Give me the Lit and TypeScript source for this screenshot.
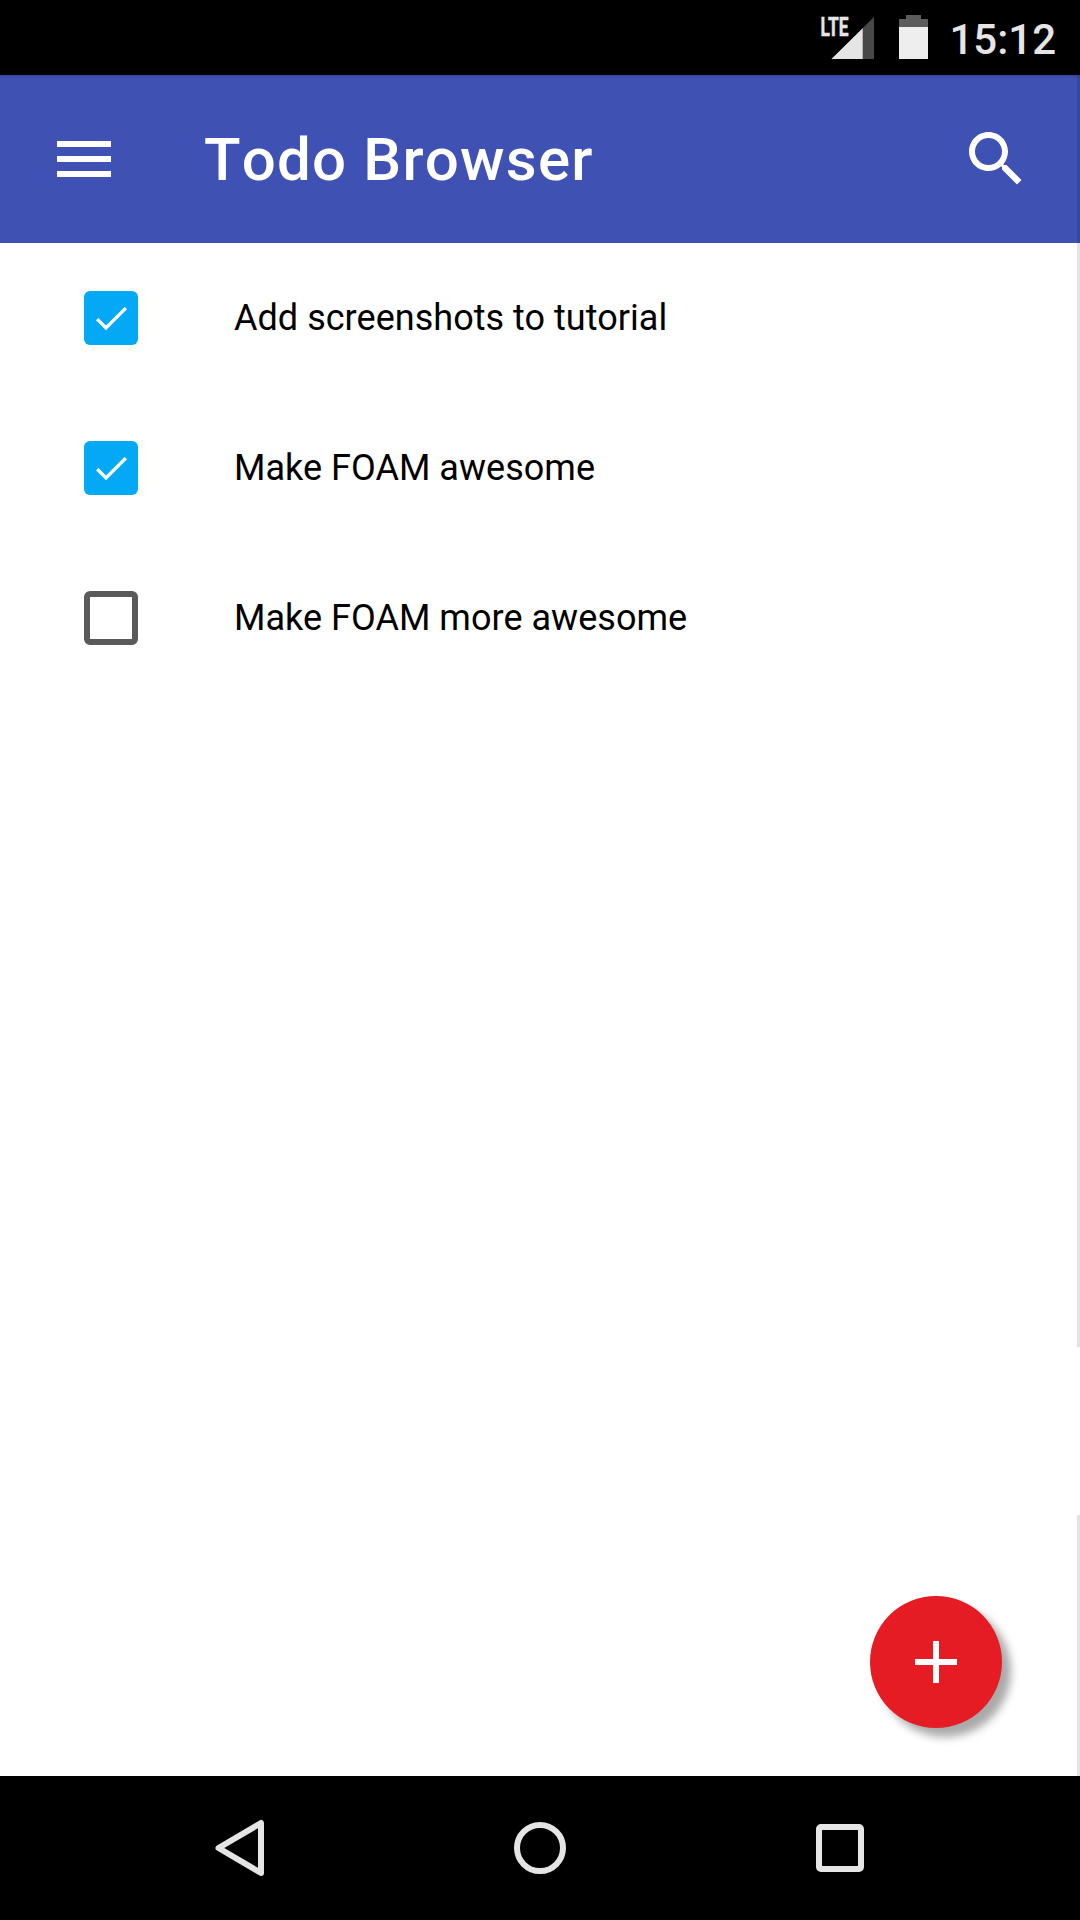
import { LitElement, html, svg, css } from "lit";
import { customElement, property, state } from "lit/decorators.js";
import { classMap } from "lit/directives/class-map.js";

interface Todo {
  label: string;
  done: boolean;
}

@customElement("status-bar")
class StatusBar extends LitElement {
  static styles = css`
    :host {
      display: flex;
      justify-content: flex-end;
      height: 75px;
      background: #000;
      color: #e5e5e5;
    }
    .signal {
      width: 54px;
      height: 75px;
    }
    .network {
      font: 700 26px Roboto, sans-serif;
      fill: #e5e5e5;
      stroke: #e5e5e5;
      stroke-width: 0.5;
    }
    .battery {
      width: 30px;
      height: 75px;
      margin-left: 25px;
    }
    .clock {
      margin-left: 20px;
      padding-right: 24px;
      font: 500 42px/80px Roboto, sans-serif;
    }
  `;

  render() {
    return html`
      <svg class="signal" viewBox="0 0 54 75">
        <text class="network" x="0.5" y="35.5" textLength="28" lengthAdjust="spacingAndGlyphs">LTE</text>
        <path d="M54 17V59H11.5Z" fill="#484848" />
        <path d="M42.7 28.2V59H11.5Z" fill="#e5e5e5" />
      </svg>
      <svg class="battery" viewBox="0 0 30 75">
        <path d="M7 15h15v4h7v8H0v-8h7z" fill="#5c5c5c" />
        <path d="M0 27h29v32H0z" fill="#eee" />
      </svg>
      <span class="clock">15:12</span>
    `;
  }
}

@customElement("app-header")
class AppHeader extends LitElement {
  @property() heading = "";

  static styles = css`
    :host {
      display: flex;
      align-items: center;
      height: 168px;
      box-sizing: border-box;
      padding: 0 48px;
      background: linear-gradient(#37479f, #3f51b3 4px);
      color: #fff;
    }
    .icon {
      width: 72px;
      height: 72px;
      fill: #fff;
    }
    .heading {
      flex: 1;
      margin: 2px 0 0 84px;
      font: 500 60px/72px Roboto, sans-serif;
      font-kerning: none;
      letter-spacing: 1.2px;
    }
  `;

  render() {
    return html`
      <svg class="icon" viewBox="0 0 24 24">
        <path d="M3 18h18v-2H3v2zm0-5h18v-2H3v2zm0-7v2h18V6H3z" />
      </svg>
      <h1 class="heading">${this.heading}</h1>
      <svg class="icon" viewBox="0 0 24 24">
        <path d="M15.5 14h-.79l-.28-.27C15.41 12.59 16 11.11 16 9.5 16 5.91 13.09 3 9.5 3S3 5.91 3 9.5 5.91 16 9.5 16c1.61 0 3.09-.59 4.23-1.57l.27.28v.79l5 4.99L20.49 19l-4.99-5zm-6 0C7.01 14 5 11.99 5 9.5S7.01 5 9.5 5 14 7.01 14 9.5 11.99 14 9.5 14z" />
      </svg>
    `;
  }
}

@customElement("todo-item")
class TodoItem extends LitElement {
  @property({ attribute: false }) todo!: Todo;

  static styles = css`
    :host {
      display: flex;
      align-items: center;
      height: 150px;
      padding-left: 84px;
    }
    .box {
      box-sizing: border-box;
      width: 54px;
      height: 54px;
      border: 6px solid #5a5a5a;
      border-radius: 6px;
    }
    .box.checked {
      border: 0;
      background: #03a9f4;
    }
    .tick {
      display: block;
      fill: #fff;
    }
    .label {
      margin-left: 96px;
      font: 400 36px/48px Roboto, sans-serif;
      letter-spacing: 0.03px;
      color: #000;
    }
  `;

  render() {
    const { done, label } = this.todo;
    return html`
      <div class=${classMap({ box: true, checked: done })}>
        ${done
          ? html`<svg class="tick" width="54" height="54" viewBox="0 0 54 54">
              ${svg`<path d="M12 29.3L14.4 27L22 34.6L40.6 16L43 18.3L22 39.2Z" />`}
            </svg>`
          : null}
      </div>
      <span class="label">${label}</span>
    `;
  }
}

@customElement("nav-bar")
class NavBar extends LitElement {
  static styles = css`
    :host {
      display: flex;
      justify-content: center;
      gap: 156px;
      height: 144px;
      background: #000;
    }
    .key {
      width: 144px;
      height: 144px;
      fill: none;
      stroke: #e5e5e5;
      stroke-width: 6;
      stroke-linejoin: round;
    }
  `;

  render() {
    return html`
      <svg class="key" viewBox="0 0 144 144"><path d="M50.5 72L93 47V97Z" /></svg>
      <svg class="key" viewBox="0 0 144 144"><circle cx="72" cy="72" r="23" /></svg>
      <svg class="key" viewBox="0 0 144 144"><rect x="51" y="51" width="42" height="42" rx="2" /></svg>
    `;
  }
}

@customElement("app-root")
class AppRoot extends LitElement {
  @state() private todos: Todo[] = [
    { label: "Add screenshots to tutorial", done: true },
    { label: "Make FOAM awesome", done: true },
    { label: "Make FOAM more awesome", done: false },
  ];

  static styles = css`
    :host {
      display: flex;
      flex-direction: column;
      width: 1080px;
      height: 1920px;
      overflow: hidden;
      background: #fff;
    }
    .screen {
      position: relative;
      flex: 1;
      display: flex;
      flex-direction: column;
    }
    .list {
      flex: 1;
    }
    .edge {
      position: absolute;
      right: 0;
      width: 3px;
      background: rgba(0, 0, 0, 0.11);
    }
    .edge.upper {
      top: 0;
      height: 1272px;
    }
    .edge.lower {
      bottom: 0;
      height: 261px;
    }
    .add {
      position: absolute;
      right: 78px;
      bottom: 48px;
      display: grid;
      place-items: center;
      width: 132px;
      height: 132px;
      padding: 0;
      border: 0;
      border-radius: 50%;
      background: #e51c23;
      box-shadow: 9px 9px 9px #aaa;
    }
    .plus {
      width: 72px;
      height: 72px;
      fill: #fff;
    }
  `;

  render() {
    return html`
      <status-bar></status-bar>
      <div class="screen">
        <app-header heading="Todo Browser"></app-header>
        <div class="list">
          ${this.todos.map((todo) => html`<todo-item .todo=${todo}></todo-item>`)}
        </div>
        <div class="edge upper"></div>
        <div class="edge lower"></div>
        <button class="add">
          <svg class="plus" viewBox="0 0 24 24"><path d="M19 13h-6v6h-2v-6H5v-2h6V5h2v6h6v2z" /></svg>
        </button>
      </div>
      <nav-bar></nav-bar>
    `;
  }
}
